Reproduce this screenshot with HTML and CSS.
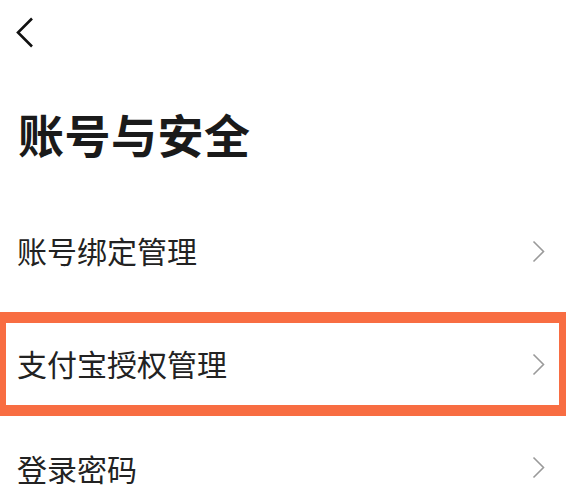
FILE: index.html
```html
<!DOCTYPE html>
<html lang="zh-CN">
<head>
<meta charset="utf-8">
<link rel="stylesheet" href="styles.css">
</head>
<body>
<div class="page">
  <div class="topbar">
    <svg class="back" width="18" height="31" viewBox="0 0 18 31"><polyline points="16,1.5 2,15.5 16,29.5" fill="none" stroke="#111" stroke-width="2.6" stroke-linejoin="miter"/></svg>
  </div>
  <h1 class="title">账号与安全</h1>
  <div class="list">
    <div class="row"><span class="label">账号绑定管理</span><svg class="chev" width="13" height="23" viewBox="0 0 13 23"><polyline points="1.5,1.5 11.5,11.5 1.5,21.5" fill="none" stroke="#9a9a9a" stroke-width="1.6"/></svg></div>
    <div class="row row-hl"><span class="label">支付宝授权管理</span><svg class="chev" width="13" height="23" viewBox="0 0 13 23"><polyline points="1.5,1.5 11.5,11.5 1.5,21.5" fill="none" stroke="#9a9a9a" stroke-width="1.6"/></svg></div>
    <div class="row row-last"><span class="label">登录密码</span><svg class="chev" width="13" height="23" viewBox="0 0 13 23"><polyline points="1.5,1.5 11.5,11.5 1.5,21.5" fill="none" stroke="#9a9a9a" stroke-width="1.6"/></svg></div>
  </div>
</div>
</body>
</html>
```
FILE: styles.css
```css
html, body {
  margin: 0;
  padding: 0;
  background: #fff;
}
body {
  font-family: "Noto Sans CJK SC", "Noto Sans", sans-serif;
  color: #222;
  width: 566px;
  height: 493px;
  overflow: hidden;
}
.page {
  display: flex;
  flex-direction: column;
}
.topbar {
  height: 31px;
  padding: 17px 0 0 16px;
  display: flex;
}
.back {
  display: block;
}
.title {
  margin: 62px 0 0 18px;
  font-size: 46px;
  line-height: 46px;
  font-weight: 700;
  color: #1a1a1a;
  letter-spacing: 0.5px;
}
.list {
  margin-top: 43px;
  display: flex;
  flex-direction: column;
}
.row {
  height: 104px;
  box-sizing: border-box;
  display: flex;
  align-items: center;
  justify-content: space-between;
  padding: 0 21px 0 17px;
}
.row + .row {
  margin-top: 9px;
}
.row-hl + .row {
  margin-top: 0;
}
.row-hl {
  border-style: solid;
  border-color: #f86d42;
  border-width: 11px 7px 11px 6px;
  padding: 0 14px 0 11px;
}
.row-last {
  height: 77px;
  align-items: flex-start;
  padding-top: 40px;
}
.label {
  font-size: 30px;
  line-height: 30px;
  font-weight: 400;
  color: #222;
  padding-bottom: 3px;
}
.row-last .label {
  padding-bottom: 0;
  margin-top: -3px;
}
.chev {
  display: block;
}
```
